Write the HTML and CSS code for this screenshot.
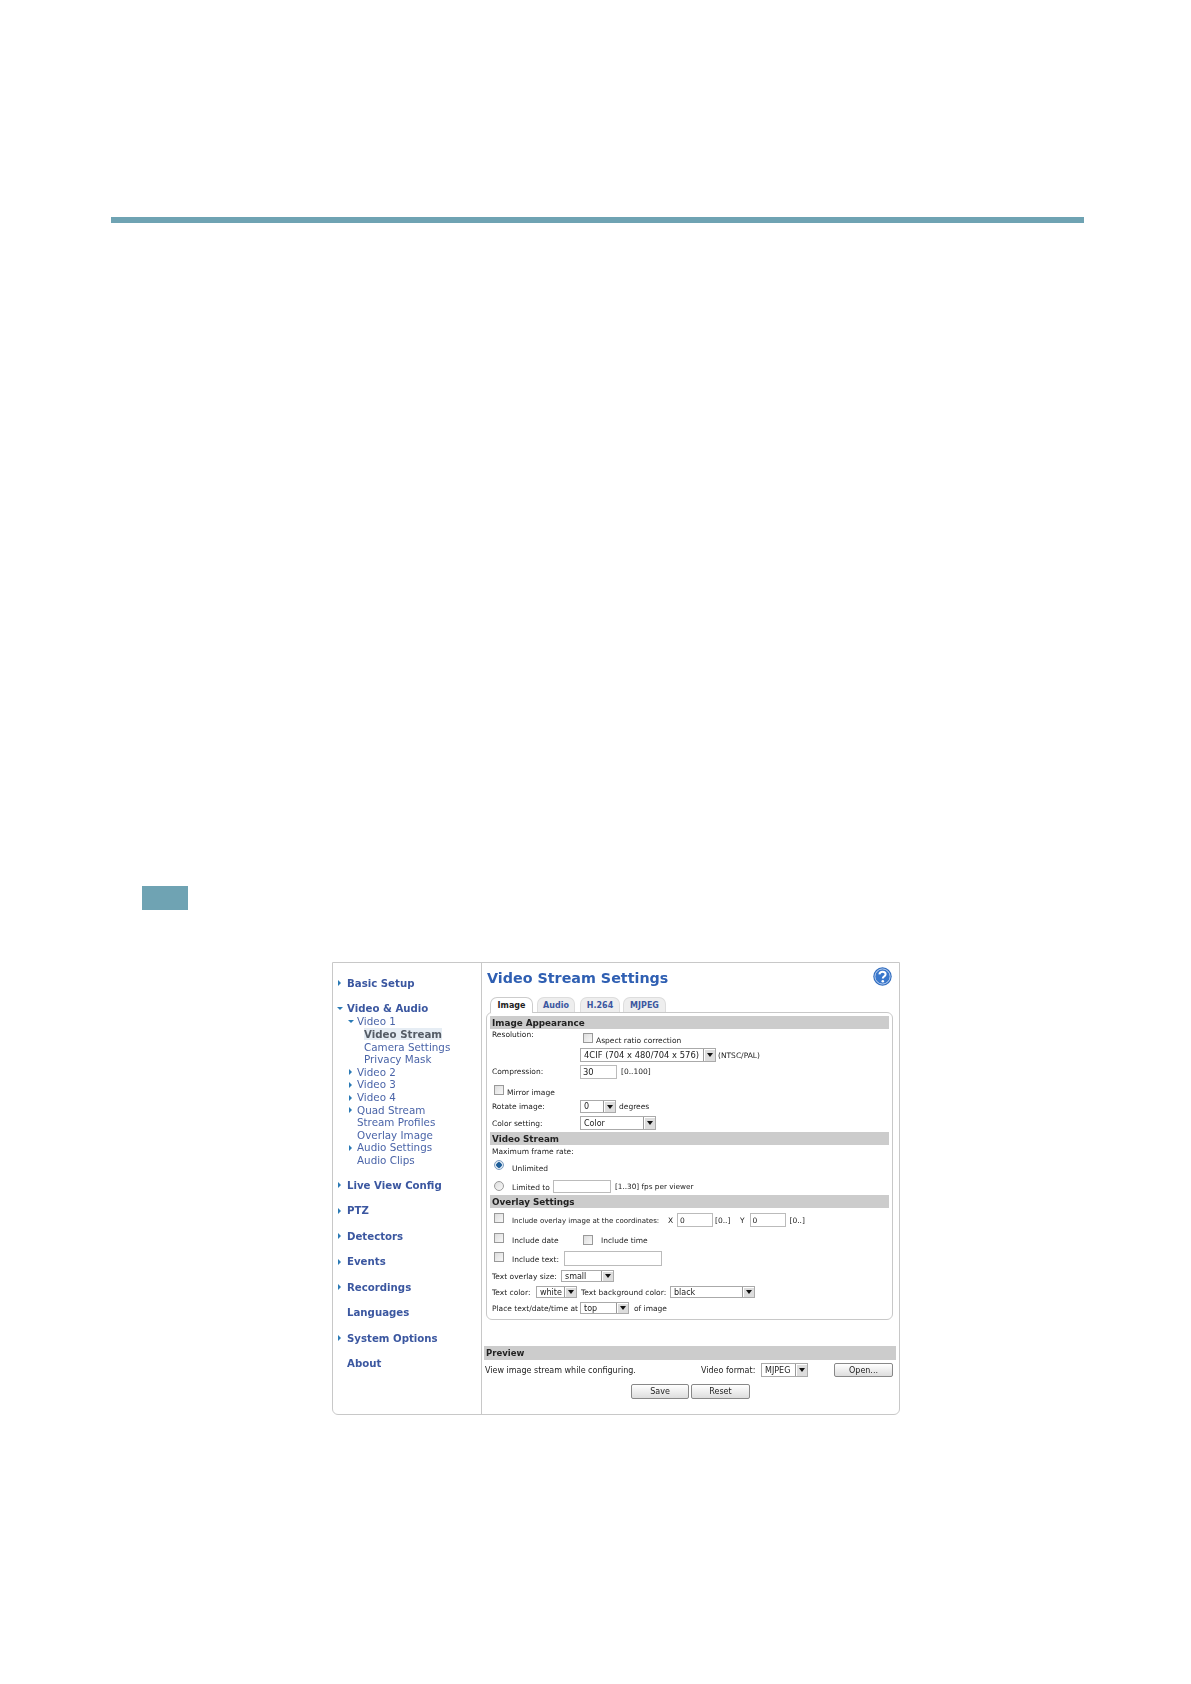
FILE: index.html
```html
<!DOCTYPE html>
<html lang="en">
<head>
<meta charset="utf-8">
<title>Video Stream Settings</title>
<link rel="stylesheet" href="styles.css">
</head>
<body>
<div class="rule"></div>
<div class="marker"></div>
<div class="figure">
  <nav class="side">
    <div class="group"><a class="top"><i class="ar"></i>Basic Setup</a></div>
    <div class="group">
      <a class="top"><i class="ad"></i>Video &amp; Audio</a>
      <a class="sub"><i class="ad"></i>Video 1</a>
      <a class="subsub current">Video Stream</a>
      <a class="subsub">Camera Settings</a>
      <a class="subsub">Privacy Mask</a>
      <a class="sub"><i class="ar"></i>Video 2</a>
      <a class="sub"><i class="ar"></i>Video 3</a>
      <a class="sub"><i class="ar"></i>Video 4</a>
      <a class="sub"><i class="ar"></i>Quad Stream</a>
      <a class="sub">Stream Profiles</a>
      <a class="sub">Overlay Image</a>
      <a class="sub"><i class="ar"></i>Audio Settings</a>
      <a class="sub">Audio Clips</a>
    </div>
    <div class="group"><a class="top"><i class="ar"></i>Live View Config</a></div>
    <div class="group"><a class="top"><i class="ar"></i>PTZ</a></div>
    <div class="group"><a class="top"><i class="ar"></i>Detectors</a></div>
    <div class="group"><a class="top"><i class="ar"></i>Events</a></div>
    <div class="group"><a class="top"><i class="ar"></i>Recordings</a></div>
    <div class="group"><a class="top">Languages</a></div>
    <div class="group"><a class="top"><i class="ar"></i>System Options</a></div>
    <div class="group"><a class="top">About</a></div>
  </nav>
  <main class="main">
    <header class="title-row">
      <h1 class="title">Video Stream Settings</h1>
      <svg class="help" viewBox="0 0 19 19" aria-label="Help">
        <circle cx="9.5" cy="9.5" r="9.2" fill="#2f6cc0"/>
        <circle cx="9.5" cy="9.5" r="7.6" fill="#3a78cc" stroke="#dfeafa" stroke-width=".8"/>
        <path d="M6.4 7.4c.2-1.8 1.5-2.7 3.2-2.7 1.8 0 3 1.1 3 2.5 0 1.3-.8 1.9-1.7 2.5-.8.5-1.1 1-1.1 1.9" fill="none" stroke="#fff" stroke-width="2"/>
        <circle cx="9.8" cy="14.2" r="1.3" fill="#fff"/>
      </svg>
    </header>
    <div class="tabs">
      <span class="tab tab-image active">Image</span>
      <span class="tab tab-audio">Audio</span>
      <span class="tab tab-h264">H.264</span>
      <span class="tab tab-mjpeg">MJPEG</span>
    </div>
    <section class="box">
      <h2 class="head head1">Image Appearance</h2>
      <div class="row r-aspect">
        <span class="label up">Resolution:</span>
        <input class="check" type="checkbox"><span class="low ml3">Aspect ratio correction</span>
      </div>
      <div class="row r-res">
        <span class="select w-res"><span class="val big">4CIF (704 x 480/704 x 576)</span><i class="btn"></i></span>
        <span class="note ml2">(NTSC/PAL)</span>
      </div>
      <div class="row r-comp">
        <span class="label">Compression:</span>
        <input class="field big w-comp" value="30"><span class="note ml4">[0..100]</span>
      </div>
      <div class="row r-mirror">
        <input class="check ind" type="checkbox"><span class="low ml3">Mirror image</span>
      </div>
      <div class="row r-rotate">
        <span class="label">Rotate image:</span>
        <span class="select w-rot"><span class="val">0</span><i class="btn"></i></span><span class="note ml3">degrees</span>
      </div>
      <div class="row r-color">
        <span class="label">Color setting:</span>
        <span class="select w-col"><span class="val">Color</span><i class="btn"></i></span>
      </div>
      <h2 class="head head2">Video Stream</h2>
      <div class="row r-max"><span class="txt">Maximum frame rate:</span></div>
      <div class="row r-unl">
        <input class="radio ind on" type="radio" checked><span class="low opt">Unlimited</span>
      </div>
      <div class="row r-lim">
        <input class="radio ind" type="radio"><span class="low opt">Limited to</span>
        <input class="field w-lim"><span class="note fps">[1..30] fps per viewer</span>
      </div>
      <h2 class="head head3">Overlay Settings</h2>
      <div class="row r-ov">
        <input class="check ind" type="checkbox"><span class="low opt w-ovl">Include overlay image at the coordinates:</span>
        <span class="note w-x">X</span><input class="field w-xy" value="0"><span class="note w-rng">[0..]</span>
        <span class="note w-y">Y</span><input class="field w-xy" value="0"><span class="note ml4">[0..]</span>
      </div>
      <div class="row r-date">
        <input class="check ind" type="checkbox"><span class="low opt w-date">Include date</span>
        <input class="check" type="checkbox"><span class="low time">Include time</span>
      </div>
      <div class="row r-text">
        <input class="check ind" type="checkbox"><span class="low opt w-inc">Include text:</span>
        <input class="field w-txt">
      </div>
      <div class="row r-size">
        <span class="txt w-size">Text overlay size:</span>
        <span class="select w-sm"><span class="val">small</span><i class="btn"></i></span>
      </div>
      <div class="row r-tcol">
        <span class="txt w-tc">Text color:</span>
        <span class="select w-wh"><span class="val">white</span><i class="btn"></i></span>
        <span class="txt w-bg">Text background color:</span>
        <span class="select w-bl"><span class="val">black</span><i class="btn"></i></span>
      </div>
      <div class="row r-place">
        <span class="label">Place text/date/time at</span>
        <span class="select w-top"><span class="val">top</span><i class="btn"></i></span><span class="note ml5">of image</span>
      </div>
    </section>
    <h2 class="head prev-head">Preview</h2>
    <div class="prev-row">
      <span class="prev-text">View image stream while configuring.</span>
      <span class="prev-fmt">Video format:</span>
      <span class="select w-fmt"><span class="val">MJPEG</span><i class="btn"></i></span>
      <button class="button w-open">Open...</button>
    </div>
    <div class="actions">
      <button class="button w-save">Save</button>
      <button class="button w-reset">Reset</button>
    </div>
  </main>
</div>
</body>
</html>
```

FILE: styles.css
```css
* { box-sizing: border-box; }
html, body { margin: 0; padding: 0; background: #fff; }
body { height: 1684px; padding-top: 217px; font-family: "DejaVu Sans", Verdana, sans-serif; color: #222; overflow: hidden; }

.rule { height: 6px; margin: 0 107px 0 111px; background: #6fa3b3; }
.marker { width: 46px; height: 24px; margin: 663px 0 0 142px; background: #6fa3b3; }

.figure {
  display: flex; width: 568px; height: 453px; margin: 52px 0 0 332px;
  border: 1px solid #c8c8c8; border-radius: 0 0 6px 6px;
  filter: blur(0.4px);
}

.side { width: 149px; flex: none; border-right: 1px solid #c8c8c8; padding-top: 14px; }
.group { margin-bottom: 12.9px; }
.side a { display: flex; align-items: center; height: 12.6px; white-space: nowrap; }
.top { padding-left: 14px; font-weight: 700; font-size: 10.2px; color: #3b57a0; position: relative; }
.sub { padding-left: 24px; font-size: 10.35px; color: #4a64a8; position: relative; }
.subsub { margin-left: 31px; padding-left: 0; font-size: 10.35px; color: #4a64a8; }
.side a.current { width: 78px; font-size: 10.25px; font-weight: 700; color: #555c66; background: #e6edf4; }
.ar, .ad { position: absolute; width: 0; height: 0; }
.ar { border-left: 3.5px solid #2b7ab5; border-top: 3px solid transparent; border-bottom: 3px solid transparent; }
.ad { border-top: 3.5px solid #2b7ab5; border-left: 3px solid transparent; border-right: 3px solid transparent; }
.top .ar { left: 5px; }
.top .ad { left: 4px; }
.sub .ar { left: 16px; top: 4px; }
.sub .ad { left: 15px; top: 5px; }

.main { flex: 1; min-width: 0; }
.title-row { display: flex; justify-content: space-between; height: 34px; padding: 5px 7px 0 5px; }
.title { margin: 0; font-size: 14.3px; line-height: 20px; font-weight: 700; color: #2f5fb2; }
.help { width: 19px; height: 19px; margin-top: -1px; }

.tabs { display: flex; height: 15px; padding-left: 8px; position: relative; }
.tab {
  display: flex; align-items: center; justify-content: center; height: 15px;
  border: 1px solid #ddd; border-bottom: 0; border-radius: 7px 7px 0 0;
  background: #eee; font-size: 8px; font-weight: 700; color: #3b57a0;
}
.tab.active { height: 16px; background: #fff; color: #222; border-color: #ccc; position: relative; z-index: 1; }
.tab-image { width: 43px; margin-right: 4px; }
.tab-audio { width: 38px; margin-right: 5px; }
.tab-h264 { width: 40px; margin-right: 3px; }
.tab-mjpeg { width: 43px; }

.box { height: 308px; margin: 0 6px 0 4px; padding: 3px 3px 0; border: 1px solid #c8c8c8; border-radius: 6px; }
.head { margin: 0; height: 13px; padding-left: 2px; background: #ccc; font-size: 8.8px; line-height: 14px; font-weight: 700; color: #222; }
.head2 { margin-top: 2px; }
.head3 { margin-top: 2px; }

.row { display: flex; align-items: center; padding-left: 2px; font-size: 7.5px; white-space: nowrap; }
.label { width: 88px; flex: none; }
.label.up { align-self: flex-start; line-height: 11px; }
.r-aspect { height: 18px; }
.r-aspect .check { margin-left: 3px; margin-top: -1px; }
.r-res { height: 14px; margin-top: 1px; padding-left: 90px; }
.r-comp { height: 15px; margin-top: 2px; }
.r-mirror { height: 18px; margin-top: 2px; }
.r-rotate { height: 13px; margin-top: 1px; }
.r-color { height: 14px; margin-top: 3px; }
.r-max { height: 11px; margin-top: 1px; }
.r-unl { height: 14px; margin-top: 2px; }
.r-lim { height: 13px; margin-top: 7px; }
.r-ov { height: 14px; margin-top: 5px; }
.r-date { height: 14px; margin-top: 6px; }
.r-text { height: 15px; margin-top: 4px; }
.r-size { height: 12px; margin-top: 4px; }
.r-tcol { height: 12px; margin-top: 4px; }
.r-place { height: 12px; margin-top: 4px; }

.check, .radio {
  appearance: none; -webkit-appearance: none; flex: none; margin: 0; width: 10px; height: 10px;
  border: 1px solid #999; background: linear-gradient(135deg, #ddd, #f8f8f8);
}
.radio { border-radius: 50%; }
.radio.on { background: radial-gradient(circle, #1f5f9a 0 2.5px, #dfe8f2 3px); border-color: #7f9fc0; }
.ind { margin-left: 2px; margin-top: -4px; }
.r-mirror .ind { margin-top: 0; }
.r-unl .ind, .r-lim .ind { margin-top: -2px; }
.low { position: relative; top: 2px; }
.r-ov .low, .r-date .low { top: 0; }
.r-lim .low { top: 1px; }
.r-text .low { top: 1px; }
.opt { margin-left: 8px; }
.ml2 { margin-left: 2px; }
.ml3 { margin-left: 3px; }
.ml4 { margin-left: 4px; }
.ml5 { margin-left: 5px; }
.fps { margin-left: 4px; font-size: 7.3px; }

.field { height: 14px; border: 1px solid #bbb; background: #fff; padding: 0 2px; margin: 0; font: 7.5px "DejaVu Sans", sans-serif; color: #222; flex: none; outline: 0; }
.field.big, .big { font-size: 8.4px; }
.select { display: flex; align-items: center; justify-content: space-between; height: 100%; border: 1px solid #aaa; background: #fff; padding-left: 3px; flex: none; font-size: 8px; }
.btn { display: flex; align-items: center; justify-content: center; width: 12px; height: 100%; flex: none; margin: 0; background: #ddd; border-left: 1px solid #999; box-shadow: inset 1px 1px 0 #fff; }
.btn::after { content: ""; width: 0; height: 0; border-top: 4px solid #111; border-left: 3px solid transparent; border-right: 3px solid transparent; }

.w-res { width: 136px; }
.w-comp { width: 37px; }
.w-rot { width: 36px; }
.w-col { width: 76px; }
.w-lim { width: 58px; height: 13px; margin-left: 3px; }
.w-ovl { width: 156px; font-size: 7.05px; }
.w-x { width: 9px; }
.w-xy { width: 36px; }
.w-rng { width: 25px; margin-left: 2px; }
.w-y { width: 9.5px; }
.w-date { width: 71px; }
.time { margin-left: 8px; }
.w-inc { width: 52px; }
.w-txt { width: 98px; height: 15px; }
.w-size { width: 69px; }
.w-sm { width: 53px; }
.w-tc { width: 44px; }
.w-wh { width: 41px; }
.w-bg { width: 89px; margin-left: 4px; }
.w-bl { width: 85px; }
.w-top { width: 49px; }

.prev-head { height: 14px; line-height: 14px; margin: 26px 3px 0 2px; padding-left: 2px; font-size: 8.5px; }
.prev-row { display: flex; align-items: center; height: 14px; margin-top: 3px; padding-left: 3px; font-size: 8px; white-space: nowrap; }
.prev-text { width: 216px; flex: none; }
.prev-fmt { width: 60px; flex: none; }
.w-fmt { width: 47px; }
.button { height: 14px; padding: 0; font: 8px "DejaVu Sans", sans-serif; color: #222; border: 1px solid #888; border-radius: 2px; background: linear-gradient(#fff, #ddd); }
.w-open { width: 59px; margin-left: 26px; }
.actions { display: flex; gap: 2px; margin-top: 7px; padding-left: 149px; }
.w-save { width: 58px; height: 15px; }
.w-reset { width: 59px; height: 15px; }
```
